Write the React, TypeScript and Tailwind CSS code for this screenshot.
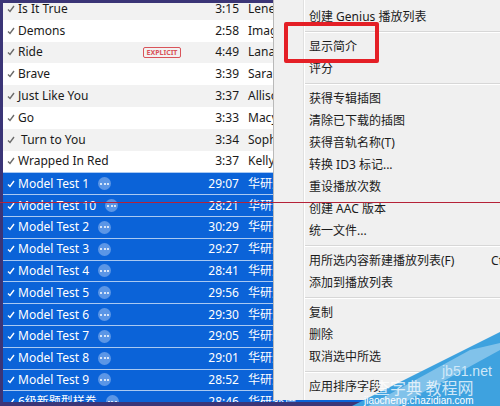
import React from "react";

interface track {
    name: string;
    time: string;
    artist: string;
    explicit?: boolean;
    selected?: boolean;
}

const tracks: track[] = [
    { name: "Is It True", time: "3:15", artist: "Lene Marlin" },
    { name: "Demons", time: "2:58", artist: "Imagine Dragons" },
    { name: "Ride", time: "4:49", artist: "Lana Del Rey", explicit: true },
    { name: "Brave", time: "3:39", artist: "Sara Bareilles" },
    { name: "Just Like You", time: "3:37", artist: "Allison Iraheta" },
    { name: "Go", time: "3:33", artist: "Macy Gray" },
    { name: "\u00a0Turn to You", time: "3:34", artist: "Sophie Ellis" },
    { name: "Wrapped In Red", time: "3:37", artist: "Kelly Clarkson" },
    { name: "Model Test 1", time: "29:07", artist: "华研外语", selected: true },
    { name: "Model Test 10", time: "28:21", artist: "华研外语", selected: true },
    { name: "Model Test 2", time: "30:29", artist: "华研外语", selected: true },
    { name: "Model Test 3", time: "29:27", artist: "华研外语", selected: true },
    { name: "Model Test 4", time: "28:41", artist: "华研外语", selected: true },
    { name: "Model Test 5", time: "29:56", artist: "华研外语", selected: true },
    { name: "Model Test 6", time: "29:30", artist: "华研外语", selected: true },
    { name: "Model Test 7", time: "29:05", artist: "华研外语", selected: true },
    { name: "Model Test 8", time: "29:01", artist: "华研外语", selected: true },
    { name: "Model Test 9", time: "28:52", artist: "华研外语", selected: true },
    { name: "6级新题型样卷", time: "28:46", artist: "华研外语", selected: true },
];

// null = separator
const menuItems: (string | null)[] = [
    "创建 Genius 播放列表",
    null,
    "显示简介",
    "评分",
    null,
    "获得专辑插图",
    "清除已下载的插图",
    "获得音轨名称(T)",
    "转换 ID3 标记...",
    "重设播放次数",
    "创建 AAC 版本",
    "统一文件...",
    null,
    "用所选内容新建播放列表(F)",
    "添加到播放列表",
    null,
    "复制",
    "删除",
    "取消选中所选",
    null,
    "应用排序字段",
];

const font = { fontFamily: '"Noto Sans", "Noto Sans CJK SC", sans-serif' };

const Check = ({ white }: { white?: boolean }) => (
    <svg width="8" height="8" viewBox="0 0 8 8">
        <path d="M1 4.5 L3 6.5 L7 1" fill="none" stroke={white ? "#ffffff" : "#6b6b6b"} strokeWidth="1.4" />
    </svg>
);

const Dots = () => (
    <span className="w-[13px] h-[13px] rounded-full bg-[#5b96e6] flex items-center justify-center gap-[1.5px] shrink-0">
        <span className="w-[2px] h-[2px] rounded-full bg-white" />
        <span className="w-[2px] h-[2px] rounded-full bg-white" />
        <span className="w-[2px] h-[2px] rounded-full bg-white" />
    </span>
);

const App = () => {
    return (
        <div className="relative w-[500px] h-[406px] overflow-hidden bg-[#3b3577]" style={font}>
            {/* track list */}
            <div className="absolute left-[3px] top-[3px] right-0 bottom-[4px] overflow-hidden">
                <div className="-mt-[5px] flex flex-col">
                    {tracks.map((t, i) => (
                        <div
                            key={i}
                            className={`flex items-center h-[21.8px] text-[12px] ${
                                t.selected
                                    ? "bg-[#0b63d8] text-white border-t border-t-[#a9c9f2]"
                                    : i % 2 === 0
                                    ? "bg-[#f2f2f2] text-[#1a1a1a]"
                                    : "bg-white text-[#1a1a1a]"
                            }`}
                        >
                            <span className="w-[15px] flex justify-center">
                                <Check white={t.selected} />
                            </span>
                            <span className="w-[125px] flex items-center gap-[9px] whitespace-nowrap">
                                {t.name}
                                {t.selected && <Dots />}
                            </span>
                            <span className="w-[60px] flex items-center">
                                {t.explicit && (
                                    <span className="w-[38px] h-[11px] border border-[#d9545a] rounded-[2px] text-[#d9545a] text-[7px] font-bold leading-none flex items-center justify-center">
                                        EXPLICIT
                                    </span>
                                )}
                            </span>
                            <span className="w-[36px] text-right">{t.time}</span>
                            <span className="ml-[9px] whitespace-nowrap">{t.artist}</span>
                        </div>
                    ))}
                </div>
            </div>

            {/* context menu */}
            <div className="absolute left-[273px] top-0 w-[260px] h-[400px] bg-[#f0f0f0] border-l border-l-[#b9b9b9] pt-[6px] text-[12px] text-[#1b1b1b]">
                <div className="absolute left-[29px] top-0 bottom-0 w-[2px] border-l border-l-[#e0e0e0] border-r border-r-white" />
                {menuItems.map((m, i) =>
                    m === null ? (
                        <div key={i} className="h-[8px] flex items-center pl-[31px]">
                            <div className="w-full h-[2px] border-t border-t-[#d7d7d7] border-b border-b-white" />
                        </div>
                    ) : (
                        <div key={i} className="h-[22px] flex items-center pl-[35px] whitespace-nowrap">
                            <span>{m}</span>
                            {m.startsWith("用所选") && <span className="ml-auto pr-[6px]">Ctrl+N</span>}
                        </div>
                    )
                )}
            </div>

            {/* highlight box */}
            <div className="absolute left-[284px] top-[22px] w-[95px] h-[41px] border-[4px] border-[#e41f26] rounded-[2px]" />

            {/* red guide line */}
            <div className="absolute left-0 right-0 top-[202px] h-px bg-[#b52238]" />

            {/* watermark */}
            <svg className="absolute left-0 top-0" width="500" height="406">
                <polygon points="352,406 500,332 500,406" fill="#3ea2df" />
                <polygon points="368,406 470,350 500,343 500,350 398,406" fill="#ffffff" opacity="0.35" />
                <text x="442" y="376" fontSize="14" fill="#cfe8f8" fontFamily="Liberation Sans, sans-serif">jb51.net</text>
                <text x="374" y="394" fontSize="16" fill="#ffffff" opacity="0.75" fontFamily="Noto Sans CJK SC, sans-serif">查字典 教程网</text>
                <text x="364" y="404" fontSize="10" fill="#ffffff" fontFamily="Liberation Sans, sans-serif">jiaocheng.chazidian.com</text>
            </svg>
        </div>
    );
};

export default App;
